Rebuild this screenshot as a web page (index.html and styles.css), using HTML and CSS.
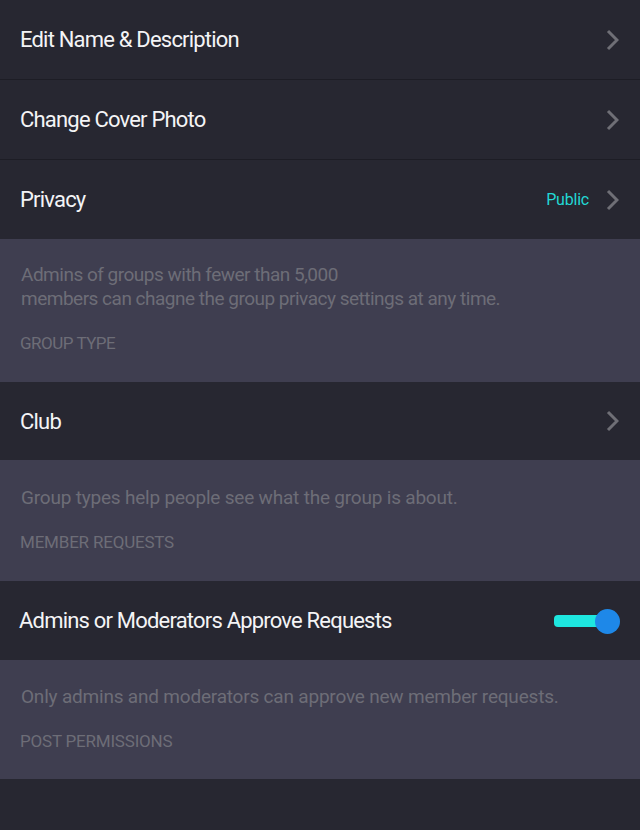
FILE: index.html
```html
<!DOCTYPE html>
<html>
<head>
<meta charset="utf-8">
<link rel="stylesheet" href="styles.css">
</head>
<body>
<div class="page">
  <div class="row bordered">
    <span class="title">Edit Name &amp; Description</span>
    <svg class="chev" viewBox="0 0 13 22" width="13" height="22"><path d="M2 2 L11 11 L2 20" fill="none" stroke="#6f6f76" stroke-width="3"/></svg>
  </div>
  <div class="row bordered">
    <span class="title">Change Cover Photo</span>
    <svg class="chev" viewBox="0 0 13 22" width="13" height="22"><path d="M2 2 L11 11 L2 20" fill="none" stroke="#6f6f76" stroke-width="3"/></svg>
  </div>
  <div class="row">
    <span class="title">Privacy</span>
    <div class="right">
      <span class="value">Public</span>
      <svg class="chev" viewBox="0 0 13 22" width="13" height="22"><path d="M2 2 L11 11 L2 20" fill="none" stroke="#6f6f76" stroke-width="3"/></svg>
    </div>
  </div>
  <div class="note first">
    <p class="desc">Admins of groups with fewer than 5,000<br>members can chagne the group privacy settings at any time.</p>
    <p class="header">GROUP TYPE</p>
  </div>
  <div class="row short">
    <span class="title">Club</span>
    <svg class="chev" viewBox="0 0 13 22" width="13" height="22"><path d="M2 2 L11 11 L2 20" fill="none" stroke="#6f6f76" stroke-width="3"/></svg>
  </div>
  <div class="note middle">
    <p class="desc wide">Group types help people see what the group is about.</p>
    <p class="header wide">MEMBER REQUESTS</p>
  </div>
  <div class="row toggle-row">
    <span class="title">Admins or Moderators Approve Requests</span>
    <div class="toggle"><span class="track"></span><span class="knob"></span></div>
  </div>
  <div class="note last">
    <p class="desc wide">Only admins and moderators can approve new member requests.</p>
    <p class="header wide">POST PERMISSIONS</p>
  </div>
</div>
</body>
</html>
```
FILE: styles.css
```css
* { box-sizing: border-box; }
html, body { margin: 0; padding: 0; background: #272731; }
body { font-family: Roboto, "Liberation Sans", sans-serif; }
.page { width: 640px; height: 830px; background: #272731; }
.row {
  height: 79px;
  display: flex;
  align-items: center;
  justify-content: space-between;
  padding: 0 21px 0 20px;
  background: #272731;
}
.row.bordered { height: 80px; border-bottom: 1px solid #1d1d25; }
.row.short { height: 78px; }
.title {
  color: #f4f4f6;
  font-size: 22px;
  letter-spacing: -0.8px;
}
.toggle-row { padding-left: 19px; padding-right: 20px; }
.right { display: flex; align-items: center; gap: 17px; }
.value { color: #22d8d4; font-size: 16px; letter-spacing: -0.2px; }
.chev { display: block; }
.note {
  background: #3f3e50;
  padding: 25px 0 26px 20px;
}
.note.first { padding-top: 24px; padding-bottom: 27px; }
.note.middle { padding-top: 26px; padding-bottom: 27px; }
.note.last { padding-bottom: 26px; }
.desc {
  margin: 0 0 20px 1px;
  color: #6d6d77;
  font-size: 19px;
  line-height: 24px;
  letter-spacing: -0.5px;
}
.desc.wide { letter-spacing: -0.2px; }
.header {
  margin: 0;
  color: #6d6d77;
  font-size: 17px;
  line-height: 24px;
  letter-spacing: -0.5px;
}
.header.wide { letter-spacing: -0.2px; }
.toggle { position: relative; width: 67px; height: 26px; }
.track {
  position: absolute; left: 1px; top: 7px;
  width: 50px; height: 12px;
  background: #1ee6df; border-radius: 4px;
}
.knob {
  position: absolute; right: 0; top: 1px;
  width: 25px; height: 25px;
  background: #1e88e8; border-radius: 50%;
}
```
